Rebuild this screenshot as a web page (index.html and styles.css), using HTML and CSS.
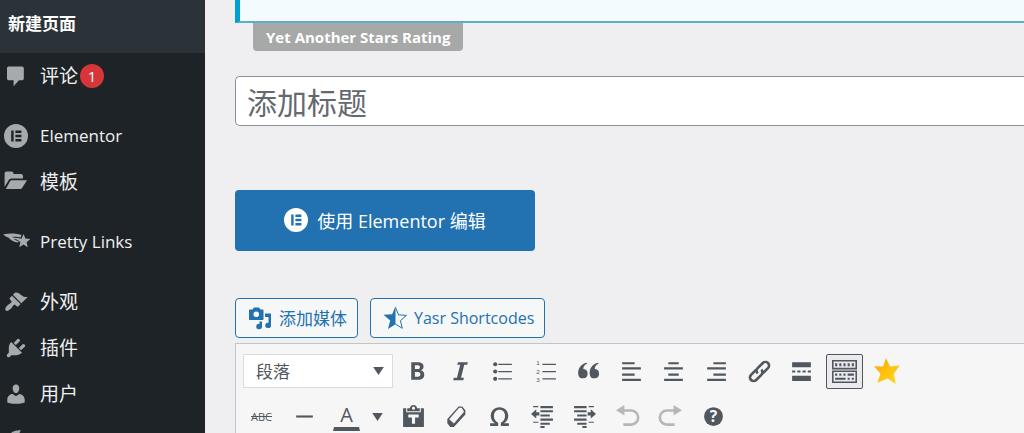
FILE: index.html
```
<!DOCTYPE html>
<html lang="zh-CN">

<head>
    <meta charset="UTF-8">
    <meta name="viewport" content="width=device-width, initial-scale=1.0">
    <title>新建页面</title>
    <link rel="stylesheet" href="styles.css">
</head>

<body>
    <!-- sidebar menu -->
    <nav class="admin-menu">
        <a class="submenu-item current" href="#">新建页面</a>
        <ul class="menu-list">
            <li>
                <a class="menu-item" href="#">
                    <svg class="menu-icon" viewBox="0 0 20 20"><path d="M4 2h11c.8 0 1.500.7 1.500 1.500v8.500c0 .8-.7 1.500-1.500 1.500h-2.500L8 18.500v-5H4c-.8 0-1.500-.7-1.500-1.500V3.500C2.500 2.700 3.200 2 4 2z"/></svg>
                    <span>评论</span><span class="badge">1</span>
                </a>
            </li>
            <li class="separator"></li>
            <li>
                <a class="menu-item latin" href="#">
                    <svg class="menu-icon" viewBox="0 0 20 20"><path fill-rule="evenodd" d="M10 0a10 10 0 1 0 0 20a10 10 0 1 0 0-20zM6 5.500h2v9H6zM9.500 5.500h5v2h-5zM9.500 9h5v2h-5zM9.500 12.500h5v2h-5z"/></svg>
                    <span>Elementor</span>
                </a>
            </li>
            <li>
                <a class="menu-item" href="#">
                    <svg class="menu-icon" viewBox="0 0 20 20"><path d="M.5 14V3c0-1 .7-1.700 1.700-1.700h4c1 0 1.700.7 1.700 1.700v.4h6.200c1 0 1.700.7 1.700 1.700V7H6.500C5 7 4.300 7.600 3.600 8.900zM1.500 15.800l3.200-5.900c.4-.9 1.100-1.400 2-1.400h12.500l-4 6.200c-.4.800-1 1.100-1.900 1.100z"/></svg>
                    <span>模板</span>
                </a>
            </li>
            <li class="separator"></li>
            <li>
                <a class="menu-item latin" href="#">
                    <svg class="menu-icon wide" viewBox="0 0 26 24"><path d="M-1 4.500c6-1.500 13-1.300 18.500.5l-1 2.500c-3-1-6-1-8.500-.5 2 1 4.500 1.300 7.500 1l-1 1.500H13c-1 0-2-.1-3-.4 1 1.200 2.500 1.700 4.500 1.900l-.5 1.500c-4-.3-7-2-9-4.500C3 7 .8 6 -1 4.500z"/><path d="M19.500 4l1.900 4.600 5 .4-3.800 3.300 1.200 4.900-4.300-2.700-4.300 2.700 1.200-4.900L12.600 9l5-.4z"/></svg>
                    <span>Pretty Links</span>
                </a>
            </li>
            <li class="separator"></li>
            <li>
                <a class="menu-item" href="#">
                    <svg class="menu-icon" viewBox="0 0 20 20"><path d="M14.480 11.060L7.410 3.990l1.500-1.500c.5-.56 2.300-.47 3.510.32 1.210.8 1.430 1.280 2.910 2.100 1.180.64 2.450 1.260 4.450.85zm-.71.71L6.700 4.700 4.930 6.470c-.39.39-.39 1.020 0 1.410l1.060 1.060c.39.39.39 1.030 0 1.420-.6.6-1.430 1.110-2.210 1.690-.35.26-.7.530-1.010.84C1.430 14.230.4 16.080 1.400 17.070c.99 1 2.840-.03 4.180-1.360.31-.31.58-.66.85-1.020.57-.78 1.080-1.610 1.690-2.210.39-.39 1.020-.39 1.410 0l1.060 1.060c.39.39 1.020.39 1.410 0z"/></svg>
                    <span>外观</span>
                </a>
            </li>
            <li>
                <a class="menu-item" href="#">
                    <svg class="menu-icon" viewBox="0 0 20 20"><path d="M13.110 4.360L9.870 7.600 8 5.730l3.240-3.240c.35-.34 1.050-.2 1.560.32.52.51.66 1.210.31 1.550zm-8 1.770l.91-1.120 9.010 9.010-1.190.84c-.71.71-2.630 1.160-3.820 1.160H6.140L4.900 17.260c-.59.59-1.540.59-2.120 0-.59-.58-.59-1.530 0-2.120l1.240-1.240v-3.880c0-1.130.4-3.190 1.090-3.890zm7.260 3.970l3.240-3.240c.34-.35 1.040-.21 1.550.31.52.51.66 1.210.31 1.550l-3.240 3.250z"/></svg>
                    <span>插件</span>
                </a>
            </li>
            <li>
                <a class="menu-item" href="#">
                    <svg class="menu-icon" viewBox="0 0 20 20"><path d="M10 9.250c-2.270 0-2.730-3.440-2.730-3.440C7 4.020 7.820 2 9.970 2c2.160 0 2.980 2.020 2.710 3.810 0 0-.41 3.440-2.680 3.440zm0 2.570L12.720 10c2.390 0 4.520 2.330 4.520 4.530v2.490s-3.650 1.130-7.240 1.130c-3.650 0-7.240-1.130-7.240-1.130v-2.490c0-2.250 1.940-4.480 4.470-4.480z"/></svg>
                    <span>用户</span>
                </a>
            </li>
            <li>
                <a class="menu-item latin" href="#">
                    <svg class="menu-icon" viewBox="0 0 20 20"><path d="M14 2c-5-.5-9 1.500-11 6-1.500 4 0 8 3 9 3-6 5-9 8-15z"/></svg>
                    <span>Updateock</span>
                </a>
            </li>
        </ul>
    </nav>

    <main class="content">
        <div class="notice"></div>
        <div class="notice-label">Yet Another Stars Rating</div>

        <input class="title-input" type="text" placeholder="添加标题" aria-label="添加标题">

        <button class="elementor-button" type="button">
            <svg class="elementor-icon" viewBox="0 0 20 20"><path fill-rule="evenodd" d="M10 0a10 10 0 1 0 0 20a10 10 0 1 0 0-20zM6 5.500h2v9H6zM9.500 5.500h5v2h-5zM9.500 9h5v2h-5zM9.500 12.500h5v2h-5z"/></svg>
            <span>使用 Elementor 编辑</span>
        </button>

        <div class="media-buttons">
            <button class="media-button" type="button">
                <svg class="media-icon" viewBox="0 0 24 24"><path fill-rule="evenodd" d="M2 3.500h2.500L6 1.500h5l1.500 2H14.500c.6 0 1 .4 1 1v8.500c0 .6-.4 1-1 1H2c-.6 0-1-.4-1-1V4.500c0-.6.4-1 1-1zM8.300 5.500a2.800 2.800 0 1 0 0 5.600a2.800 2.800 0 1 0 0-5.600z"/><path d="M17 7.500h6v12a2.900 2.600 0 1 1-2.500-2.600v-6H17z"/><path d="M11.500 15.500h2.500v5a2.900 2.700 0 1 1-2.500-2.600z"/></svg>
                <span>添加媒体</span>
            </button>
            <button class="media-button latin" type="button">
                <svg class="media-icon" viewBox="0 0 24 24"><path d="M12.500 0L9.200 8.200.5 8.800l6.700 5.700L5 23l7.500-4.700z"/><path class="thin" d="M12.500 1.500l3 7.300 8 .6-6.100 5.200 1.900 7.700-6.800-4.200"/></svg>
                <span>Yasr Shortcodes</span>
            </button>
        </div>

        <!-- editor toolbar -->
        <div class="editor">
            <div class="toolbar-row">
                <select class="format-select" aria-label="段落">
                    <option>段落</option>
                </select>
                <div class="tools tools-main">
                    <button class="tool" type="button" aria-label="粗体"><svg viewBox="0 0 24 24"><path fill-rule="evenodd" d="M6 3h6.500c3.600 0 5.300 1.500 5.300 4.200 0 1.900-1 3.300-2.700 3.700 2.200.5 3.400 2 3.400 4.200 0 3.200-2.200 4.900-5.800 4.900H6zM9.500 6v3.700H12c1.600 0 2.300-.7 2.300-1.900S13.500 6 12 6zM9.500 12.500V17h2.800c1.700 0 2.500-.8 2.500-2.300s-.9-2.200-2.600-2.200z"/></svg></button>
                    <button class="tool" type="button" aria-label="斜体"><svg viewBox="0 0 24 24"><path d="M9.500 3H19l-.6 2.500h-2.800L12.500 18h2.800l-.6 2.500H5l.6-2.500h3L11.700 5.500H8.900z"/></svg></button>
                    <button class="tool" type="button" aria-label="项目符号列表"><svg viewBox="0 0 24 24"><circle cx="5" cy="5" r="2"/><circle cx="5" cy="12" r="2"/><circle cx="5" cy="19" r="2"/><path d="M8 4.500h13v1.200H8zM8 11.500h13v1.200H8zM8 18.500h13v1.200H8z"/></svg></button>
                    <button class="tool" type="button" aria-label="编号列表"><svg viewBox="0 0 24 24"><path d="M9 4.500h13v1.200H9zM9 11.500h13v1.200H9zM9 18.500h13v1.200H9z"/><text class="list-number" x="3" y="6">1</text><text class="list-number" x="3" y="14">2</text><text class="list-number" x="3" y="22">3</text></svg></button>
                    <button class="tool" type="button" aria-label="引用"><svg viewBox="0 0 24 24"><path d="M10.500 4.500C8 5.700 7 7.500 7 9.600a4.500 4.500 0 1 1-4.800 5.200C1.500 9.500 4.500 4.300 10.500 3.500zM21.500 4.500C19 5.700 18 7.500 18 9.600a4.500 4.500 0 1 1-4.800 5.200C12.500 9.500 15.500 4.300 21.500 3.500z"/></svg></button>
                    <button class="tool" type="button" aria-label="左对齐"><svg viewBox="0 0 24 24"><path d="M3 3h12v2H3zM3 8h18v2H3zM3 14h12v2H3zM3 19h18v2H3z"/></svg></button>
                    <button class="tool" type="button" aria-label="居中对齐"><svg viewBox="0 0 24 24"><path d="M7 3h10v2H7zM3 8h18v2H3zM7 14h10v2H7zM3 19h18v2H3z"/></svg></button>
                    <button class="tool" type="button" aria-label="右对齐"><svg viewBox="0 0 24 24"><path d="M9 3h12v2H9zM3 8h18v2H3zM9 14h12v2H9zM3 19h18v2H3z"/></svg></button>
                    <button class="tool" type="button" aria-label="插入链接"><svg viewBox="0 0 24 24"><g class="stroke" transform="rotate(-45 12 12)"><path d="M11 8.500H4a3.500 3.500 0 0 0 0 7h7a3.500 3.500 0 0 0 3.500-3.500"/><path d="M13 15.500h7a3.500 3.500 0 0 0 0-7h-7a3.500 3.500 0 0 0-3.500 3.500"/></g></svg></button>
                    <button class="tool" type="button" aria-label="插入More标签"><svg viewBox="0 0 24 24"><path d="M3 3h18v5H3zM3 11h3v2H3zM8 11h3v2H8zM13 11h3v2h-3zM18 11h3v2h-3zM3 16h18v5H3z"/></svg></button>
                    <button class="tool active" type="button" aria-label="工具栏开关"><svg viewBox="0 0 24 24"><path fill-rule="evenodd" d="M0 1h24v9H0zM1.500 2.500v6h21v-6zM0 11h24v12H0zM1.500 12.500v9h21v-9z"/><path d="M3 4h2v3H3zM7 4h2v3H7zM11 4h2v3h-2zM15 4h2v3h-2zM19 4h2v3h-2zM3 14h2v2H3zM7 14h2v2H7zM11 14h2v2h-2zM15 14h6v2h-6zM3 18h10v2H3zM15 18h2v2h-2zM19 18h2v2h-2z"/></svg></button>
                    <button class="tool star" type="button" aria-label="Yasr"><svg viewBox="0 0 26 26"><defs><linearGradient id="gold" x2="1" y2="1"><stop offset="0" stop-color="#ff9f0a"/><stop offset=".5" stop-color="#ffc20e"/><stop offset="1" stop-color="#ffd91a"/></linearGradient></defs><path fill="url(#gold)" d="M12 1l3.800 7.800L25 8l-5.800 7.500 2 9.500-7.700-5L4 24l3-8.500L1 8.500l8.500.3z"/></svg></button>
                </div>
            </div>
            <div class="toolbar-row">
                <button class="tool strike" type="button">ABC</button>
                <button class="tool rule" type="button" aria-label="水平线"><svg viewBox="0 0 24 24"><path d="M4 11h16v2H4z"/></svg></button>
                <button class="tool color" type="button">A</button>
                <button class="tool caret" type="button" aria-label="文字颜色选项"><svg viewBox="0 0 24 24"><path d="M6 8h12l-6 9z"/></svg></button>
                <div class="tools tools-extra">
                    <button class="tool" type="button" aria-label="粘贴为文本"><svg viewBox="0 0 24 24"><path fill-rule="evenodd" d="M2 4h3v4h14V4h3v18H2zM7 10v3h3.500v6h3v-6H17v-3z"/><path fill-rule="evenodd" d="M6 7V4h2.500c.5-2 1.800-3 3.500-3s3 1 3.500 3H18v3zM12 2.500a1.500 1.500 0 1 0 0 3a1.500 1.500 0 1 0 0-3z"/></svg></button>
                    <button class="tool" type="button" aria-label="清除格式"><svg viewBox="0 0 24 24"><path fill-rule="evenodd" d="M14 2.500h3.500L20.500 6v4L9.500 22H6l-2.800-3.500v-4zM14.500 3.700L5 14.700l4.500 4L19.300 7.500 17 3.700z"/></svg></button>
                    <button class="tool" type="button" aria-label="特殊字符"><svg viewBox="0 0 24 24"><path d="M3 18.500h4.700C4.800 16.700 3.600 14.300 3.600 11.300 3.600 6.400 7 3 12 3s8.400 3.400 8.400 8.300c0 3-1.200 5.400-4.100 7.200H21V21h-7.700v-3c2.700-1.300 4-3.600 4-6.500 0-3.700-2-6-5.300-6s-5.300 2.300-5.300 6c0 2.900 1.300 5.200 4 6.500v3H3z"/></svg></button>
                    <button class="tool" type="button" aria-label="减少缩进"><svg viewBox="0 0 24 24"><path d="M10 2h12v2H10zM10 6h12v2H10zM10 10h9v2h-9zM10 14h12v2H10zM10 18h9v2h-9zM10 21h4v2h-4zM1 9.500L6 5v3h3v3H6v3zM3 2h5v1H3zM3 17h5v1H3z"/></svg></button>
                    <button class="tool" type="button" aria-label="增加缩进"><svg viewBox="0 0 24 24"><path d="M2 2h12v2H2zM2 6h12v2H2zM5 10h9v2H5zM2 14h12v2H2zM5 18h9v2H5zM10 21h4v2h-4zM23 9.500L18 5v3h-3v3h3v3zM16 2h5v1h-5zM16 17h5v1h-5z"/></svg></button>
                    <button class="tool disabled" type="button" aria-label="撤销" disabled><svg viewBox="0 0 24 24"><path d="M1 6l8-5v4h6.500a8 8 0 0 1 0 16H8v-2.500h7.500a5.500 5.500 0 0 0 0-11H9V11z"/></svg></button>
                    <button class="tool disabled" type="button" aria-label="重做" disabled><svg viewBox="0 0 24 24"><path d="M23 6l-8-5v4H8.500a8 8 0 0 0 0 16H16v-2.500H8.500a5.500 5.500 0 0 1 0-11H15V11z"/></svg></button>
                    <button class="tool" type="button" aria-label="键盘快捷键"><svg viewBox="0 0 24 24"><circle cx="12" cy="12" r="9"/><text class="help-mark" x="12" y="17">?</text></svg></button>
                </div>
            </div>
        </div>
    </main>
</body>

</html>
```
FILE: styles.css
```
* {
    box-sizing: border-box;
}

body {
    margin: 0;
    height: 100vh;
    display: flex;
    overflow: hidden;
    background-color: #efeff1;
    font-family: "Open Sans", "Noto Sans CJK SC", sans-serif;
    font-size: 19px;
    color: #50575e;
}

button {
    font-family: inherit;
    cursor: pointer;
}

svg {
    display: block;
    flex: none;
    fill: currentColor;
}

/* sidebar */
.admin-menu {
    flex: 0 0 205px;
    background-color: #1d2327;
    color: #f0f0f1;
}

.admin-menu a {
    display: flex;
    align-items: center;
    color: inherit;
    text-decoration: none;
    white-space: nowrap;
}

.submenu-item {
    height: 53px;
    padding: 0 8px 8px;
    background-color: #2c3338;
    font-size: 17px;
}

.submenu-item.current {
    color: #fff;
    font-weight: 700;
}

.menu-list {
    margin: 0;
    padding: 0;
    list-style: none;
}

.menu-item {
    height: 46px;
    padding-left: 4px;
}

.menu-item.latin {
    font-size: 17px;
}

.menu-item span {
    line-height: 24px;
}

.menu-icon {
    width: 24px;
    height: 24px;
    margin-right: 12px;
    color: #a7aaad;
    overflow: visible;
}

.menu-icon.wide {
    width: 26px;
    margin-right: 10px;
}

.separator {
    height: 14px;
}

.menu-item .badge {
    width: 24px;
    height: 24px;
    margin-left: 2px;
    border-radius: 50%;
    background-color: #d63638;
    color: #fff;
    font-size: 15px;
    text-align: center;
}

/* content */
.content {
    flex: 1;
    min-width: 0;
    padding-left: 30px;
}

.notice {
    height: 23px;
    border-left: 5px solid #00a0d2;
    border-bottom: 2px solid #5cacca;
    background-color: #f3fbff;
}

.notice-label {
    width: fit-content;
    margin-left: 18px;
    padding: 0 13px;
    border-radius: 0 0 4px 4px;
    background-color: #a7a8a8;
    color: #fff;
    font-size: 15px;
    font-weight: 700;
    line-height: 28px;
}

.title-input {
    display: block;
    width: 100%;
    height: 50px;
    margin-top: 25px;
    padding: 2px 11px 0;
    border: 1px solid #8c8f94;
    border-right: none;
    border-radius: 5px 0 0 5px;
    background-color: #fff;
    font-family: inherit;
    font-size: 30px;
}

.title-input::placeholder {
    color: #646970;
}

.elementor-button {
    display: flex;
    align-items: center;
    justify-content: center;
    width: 300px;
    height: 61px;
    margin-top: 64px;
    padding-bottom: 3px;
    border: none;
    border-radius: 4px;
    background-color: #2271b1;
    color: #fff;
    font-size: 18px;
    gap: 9px;
}

.elementor-icon {
    width: 24px;
    height: 24px;
}

.media-buttons {
    display: flex;
    gap: 12px;
    margin-top: 47px;
}

.media-button {
    display: flex;
    align-items: center;
    height: 40px;
    padding: 0 10px 1px 12px;
    border: 1px solid #2271b1;
    border-radius: 4px;
    background-color: #f6f7f7;
    color: #2271b1;
    font-size: 17px;
    gap: 7px;
}

.media-button.latin {
    font-size: 16px;
}

.media-icon {
    width: 24px;
    height: 24px;
}

.media-icon .thin {
    fill: none;
    stroke: currentColor;
}

/* editor toolbar */
.editor {
    height: 120px;
    margin-top: 5px;
    padding: 9px 7px;
    border: 1px solid #c3c4c7;
    border-right: none;
    background-color: #f6f6f6;
}

.toolbar-row {
    display: flex;
    align-items: center;
    height: 36px;
    margin-bottom: 9px;
}

.format-select {
    width: 150px;
    height: 34px;
    padding: 0 12px;
    border: 1px solid #dcdcde;
    border-radius: 0;
    appearance: none;
    background: #fff url("data:image/svg+xml,%3Csvg xmlns='http://www.w3.org/2000/svg' viewBox='0 0 12 9'%3E%3Cpath fill='%2350575e' d='M0 0h12L6 9z'/%3E%3C/svg%3E") no-repeat right 8px center / 11px 8px;
    color: #50575e;
    font-family: inherit;
    font-size: 17px;
}

.tools {
    display: flex;
    justify-content: space-between;
}

.tools-main {
    width: 507px;
    margin-left: 6px;
}

.tools-extra {
    width: 337px;
}

.tool {
    display: flex;
    align-items: center;
    justify-content: center;
    width: 37px;
    height: 35px;
    padding: 0;
    border: 1px solid transparent;
    border-radius: 2px;
    background: none;
    color: #50575e;
}

.tool svg {
    width: 25px;
    height: 25px;
}

.tool.active {
    border-color: #50575e;
    background-color: #ebebee;
}

.tool.star svg {
    width: 28px;
    height: 28px;
}

.tool .stroke {
    fill: none;
    stroke: currentColor;
    stroke-width: 2.5;
}

.tool.disabled {
    color: #b5b7b9;
}

.tool.strike {
    font-size: 11px;
    text-decoration: line-through;
}

.tool.rule {
    margin: 0 6px;
}

.tool.color {
    width: 27px;
    height: 30px;
    margin-left: 4px;
    border-radius: 0;
    border-bottom: 4px solid #50575e;
    font-size: 20px;
}

.tool.caret {
    width: 35px;
}

.tool.caret svg {
    width: 21px;
    height: 21px;
}

.list-number {
    font-family: "Liberation Sans", sans-serif;
    font-size: 6px;
}

.help-mark {
    fill: #f6f6f6;
    font-size: 15px;
    font-weight: 700;
    text-anchor: middle;
}
```
